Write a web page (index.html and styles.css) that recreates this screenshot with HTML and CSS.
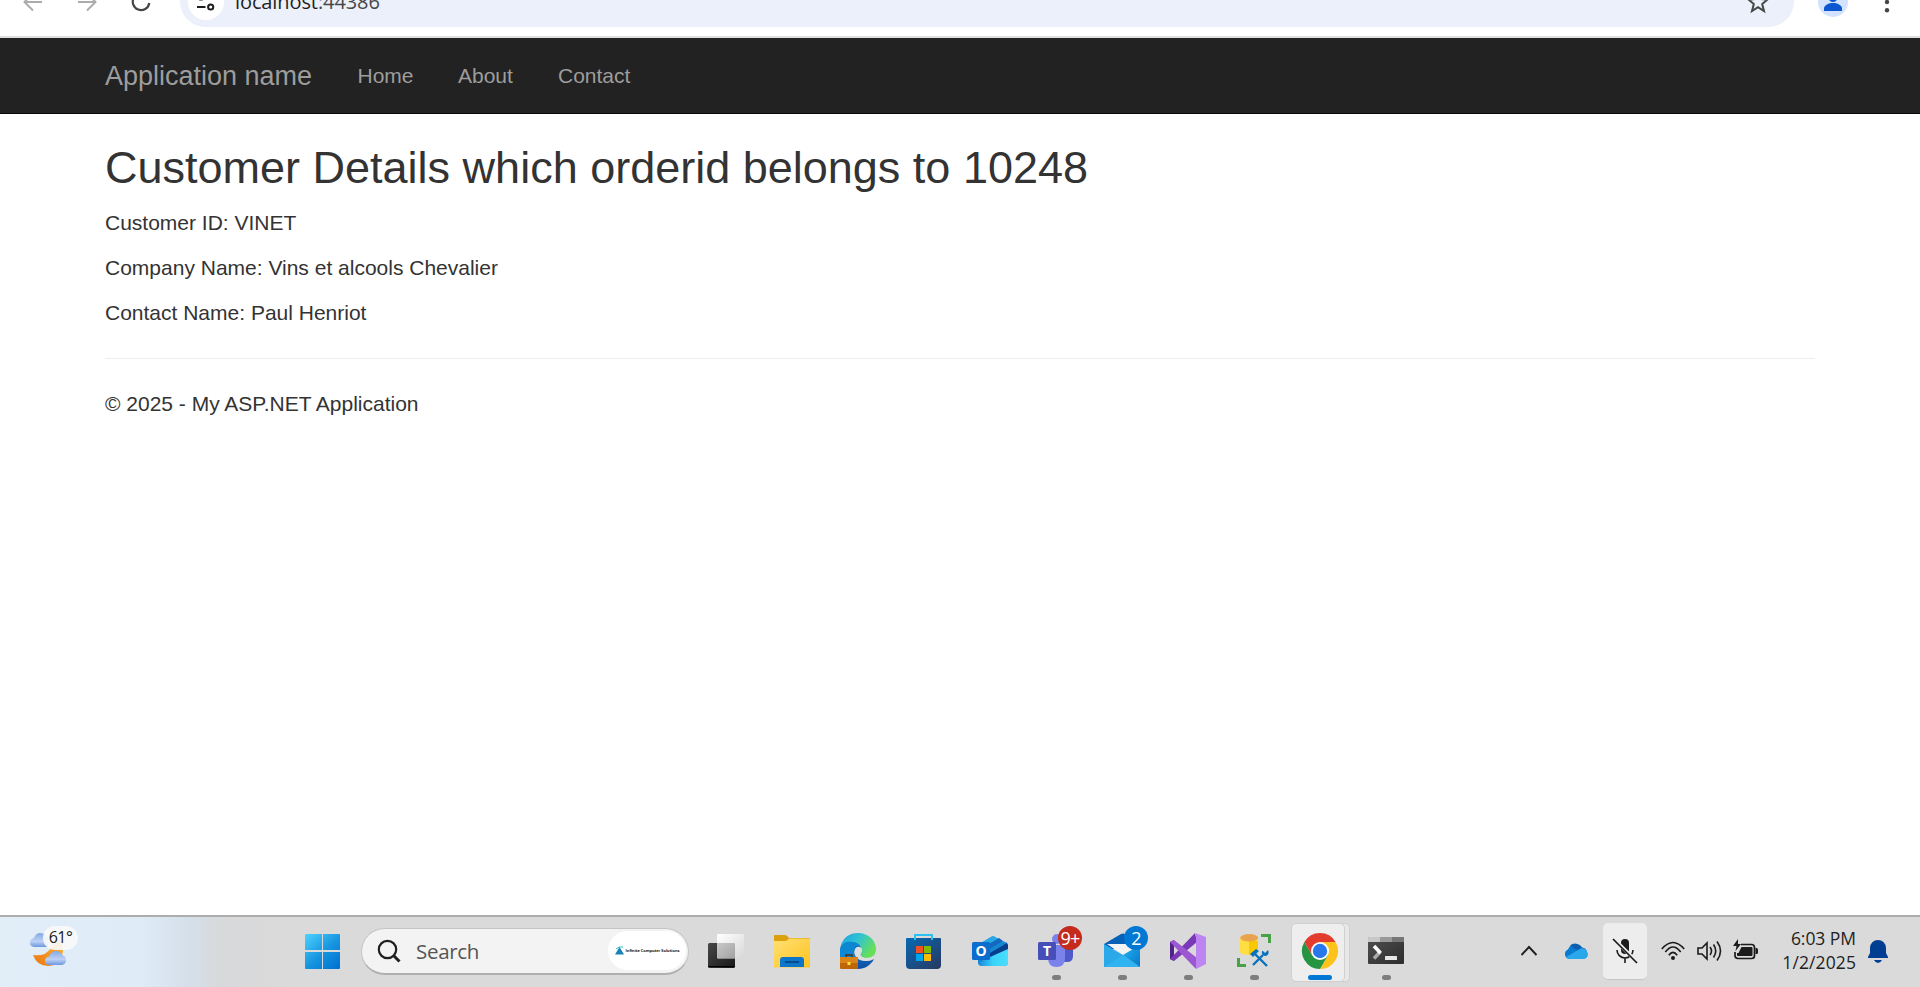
FILE: index.html
```html
<!DOCTYPE html>
<html lang="en">
<head>
<meta charset="utf-8">
<title>My ASP.NET Application</title>
<link rel="stylesheet" href="styles.css">
</head>
<body>
<div class="screen">
  <header class="browser">
    <div class="toolbar">
      <svg class="nav-icon back" width="24" height="24" viewBox="0 0 24 24"><path d="M21 12H4M12 3.500L3.500 12L12 20.500" fill="none" stroke="#acacac" stroke-width="2"/></svg>
      <svg class="nav-icon forward" width="24" height="24" viewBox="0 0 24 24"><path d="M3 12H20M12 3.500L20.500 12L12 20.500" fill="none" stroke="#acacac" stroke-width="2"/></svg>
      <svg class="nav-icon" width="24" height="24" viewBox="0 0 24 24"><path d="M18 6A8.300 8.300 0 1 0 20.300 13M20 3V9H14" fill="none" stroke="#454746" stroke-width="2.200"/></svg>
      <div class="omnibox">
        <span class="site-info"><svg width="24" height="24" viewBox="0 0 24 24" fill="none" stroke="#1f1f1f" stroke-width="2"><circle cx="7" cy="7" r="2.600"/><path d="M12 7H20M3 17H11.500"/><circle cx="16.700" cy="17" r="2.600"/></svg></span>
        <span class="url">localhost<span class="port">:44386</span></span>
        <svg class="star" width="24" height="24" viewBox="0 0 24 24"><path d="M12 2.500L14.600 9L21.500 9.500L16.200 14L18 21L12 17.200L6 21L7.800 14L2.500 9.500L9.400 9Z" fill="none" stroke="#454746" stroke-width="2"/></svg>
      </div>
      <svg class="avatar" width="30" height="30" viewBox="0 0 30 30"><circle cx="15" cy="15" r="15" fill="#d3e3fd"/><circle cx="15" cy="10.500" r="4.500" fill="#0b57d0"/><path d="M6 24V21.500C6 18 11 16 15 16S24 18 24 21.500V24Z" fill="#0b57d0"/></svg>
      <svg class="kebab" width="6" height="24" viewBox="0 0 6 24" fill="#454746"><circle cx="3" cy="4" r="2.200"/><circle cx="3" cy="12" r="2.200"/><circle cx="3" cy="20.300" r="2.200"/></svg>
    </div>
  </header>

  <nav class="navbar">
    <a class="brand">Application name</a>
    <a class="link home">Home</a>
    <a class="link about">About</a>
    <a class="link">Contact</a>
  </nav>

  <main class="content">
    <h2>Customer Details which orderid belongs to 10248</h2>
    <p>Customer ID: VINET</p>
    <p>Company Name: Vins et alcools Chevalier</p>
    <p>Contact Name: Paul Henriot</p>
    <hr>
    <footer><p>© 2025 - My ASP.NET Application</p></footer>
  </main>

  <div class="taskbar">
    <div class="weather">
      <svg width="38" height="36" viewBox="0 0 38 36">
        <defs>
          <linearGradient id="cloud" x2="0" y2="1"><stop stop-color="#86a9e5"/><stop offset=".6" stop-color="#bcd1f4"/><stop offset="1" stop-color="#6d97df"/></linearGradient>
          <linearGradient id="moon" x1="1" y1="0" x2="0" y2="1"><stop stop-color="#f5bd37"/><stop offset="1" stop-color="#ef7411"/></linearGradient>
        </defs>
        <path d="M4 14Q0 13 0 10Q0 6 4 5Q6 0 10 0Q15 0 18 5V14Z" fill="url(#cloud)"/>
        <path d="M3 22Q15 24 21 15Q25 9 26 4Q33 8 33 18Q31 33 18 33Q7 33 3 22Z" fill="url(#moon)"/>
        <path d="M19 32Q15 31 15 28Q15 24 19 23.500Q21 18 26 18Q30 18 32 22Q36 23 36 27.500Q36 31 32 32Z" fill="url(#cloud)"/>
      </svg>
      <span class="temp">61°</span>
    </div>

    <svg class="start" width="36" height="36" viewBox="0 0 36 36">
      <defs><linearGradient id="win" gradientUnits="userSpaceOnUse" x1="0" y1="0" x2="32" y2="36"><stop stop-color="#4fd4ff"/><stop offset=".55" stop-color="#1795e0"/><stop offset="1" stop-color="#0073d2"/></linearGradient></defs>
      <path d="M1 1H17V17H0V2Q0 1 1 1ZM18 1H34Q35 1 35 2V17H18ZM0 19H17V36H1Q0 36 0 35ZM18 19H35V35Q35 36 34 36H18Z" fill="url(#win)"/>
    </svg>

    <div class="search">
      <svg width="24" height="24" viewBox="0 0 24 24" fill="none" stroke="#1f1f1f"><circle cx="10.500" cy="10.500" r="8.700" stroke-width="2.200"/><path d="M16.800 16.800L22.500 22.500" stroke-width="3"/></svg>
      <span class="search-label">Search</span>
      <span class="promo"><svg width="9" height="9" viewBox="0 0 9 9"><path d="M4.500 1L9 8.500H0Z" fill="#1683b4"/><path d="M1 3Q4 0 8 1" fill="none" stroke="#36bdb1"/></svg><span>Infinite Computer Solutions</span></span>
    </div>

    <div class="apps">
      <div class="app"><svg width="36" height="36" viewBox="0 0 36 36">
        <defs><linearGradient id="tv" x2="1" y2="1"><stop stop-color="#484848"/><stop offset="1" stop-color="#171717"/></linearGradient><linearGradient id="tw" x2="1" y2="1"><stop stop-color="#fff"/><stop offset="1" stop-color="#d7d7d7"/></linearGradient><linearGradient id="to" x2="1" y2="1"><stop stop-color="#c9c9c9"/><stop offset="1" stop-color="#a2a2a2"/></linearGradient></defs>
        <rect y="10" width="27" height="25" rx="1.500" fill="url(#tv)"/><path d="M0 33.500H27" stroke="#000"/><rect x="9" y="1" width="27" height="24.500" rx="1" fill="url(#tw)"/><path d="M9 10H26Q27 10 27 11V25H9Z" fill="url(#to)"/></svg></div>

      <div class="app"><svg width="36" height="36" viewBox="0 0 36 36">
        <defs><linearGradient id="fo" x2="1" y2="1"><stop stop-color="#ffdf74"/><stop offset="1" stop-color="#ffc41f"/></linearGradient></defs>
        <path d="M0 3Q0 2 1 2H11Q13 2 15 5H35Q36 5 36 6V12H0Z" fill="#dba00d"/><path d="M0 8H11Q13 8 15 5.500H36V34.500H0Z" fill="url(#fo)"/><path d="M6 34V27Q6 24 9 24H27Q30 24 30 27V34Z" fill="#0c76cb"/><path d="M11 29H25" stroke="#074b8b" stroke-width="2"/></svg></div>

      <div class="app"><svg width="36" height="36" viewBox="0 0 36 36">
        <defs><linearGradient id="eg" x1="0" x2="1" y2=".5"><stop stop-color="#169fe0"/><stop offset=".5" stop-color="#31c3d2"/><stop offset="1" stop-color="#67df58"/></linearGradient><linearGradient id="eb" x2="0" y2="1"><stop stop-color="#1079cc"/><stop offset="1" stop-color="#0c4fa4"/></linearGradient></defs>
        <path d="M0 16C2 4 10 0 18 0C29 0 36 8 36 16C36 22 32 25 27 25C22 25 19 23 20 21C23 18 21 14 17 14Z" fill="url(#eg)"/>
        <path d="M0 17C1 11 6 8 12 9C17 9 21 12 21 16Q18 12 15 16C12 22 18 29 27 28Q31 28 34 26C31 32 25 36 18 36C8 36 0 28 0 17Z" fill="url(#eb)"/>
        <path d="M0 17C2 11 7 8 12 9Q17 9 20 13Q15 12 14 17Q13 21 16 25H0Z" fill="#0e87d3"/>
        <path d="M15 16Q18 12 21.500 15Q23 18 20.500 21Q20 24 26 25Q31 25 34 23L33 26Q28 29 22 27Q14 24 15 16Z" fill="#dcdedf"/>
        <path d="M6 24V22H12V24" fill="none" stroke="#49351f" stroke-width="1.500"/><rect y="24" width="18" height="12" rx="1" fill="#bd6508"/><rect y="24" width="18" height="6" fill="#da8418"/><rect x="7.500" y="29" width="3" height="3" fill="#ffdb35"/></svg></div>

      <div class="app"><svg width="36" height="36" viewBox="0 0 36 36">
        <defs><linearGradient id="st" x2="1" y2="1"><stop stop-color="#0869b4"/><stop offset="1" stop-color="#28385f"/></linearGradient></defs>
        <path d="M1 5H34Q35 5 35 6V32Q35 36 31 36H4Q0 36 0 32V6Q0 5 1 5Z" fill="url(#st)"/><path d="M9 7V2H26V7" fill="none" stroke="#2dc1f3" stroke-width="2"/><path fill="#f25022" d="M10 13H17V20H10Z"/><path fill="#7fba00" d="M18 13H25V20H18Z"/><path fill="#00a4ef" d="M10 21H17V28H10Z"/><path fill="#ffb900" d="M18 21H25V28H18Z"/></svg></div>

      <div class="app"><svg width="36" height="36" viewBox="0 0 36 36">
        <defs><linearGradient id="ol" x2="1" y2="0"><stop stop-color="#1886d7"/><stop offset=".5" stop-color="#3ad3fa"/><stop offset="1" stop-color="#4bdfff"/></linearGradient></defs>
        <path d="M6 12L19 4Q21 2.500 23 4L36 12V29Q36 33 32 33H10Q6 33 6 29Z" fill="#1684d0"/><path d="M7 11L19 4Q21 2.500 23 4L27 6L15 15L7 15Z" fill="#28a9e7"/><path d="M12 14L27 5L31 8L16 18Z" fill="#1269bd"/><path d="M16 20L35 9.500L36 13V16L18 25Z" fill="#063f8c"/><path d="M16 17L31 8L35 10L18 20Z" fill="#1686d3"/><path d="M18 22L34.500 10.500Q36 11 36 13V17L21 23Z" fill="#063f8c"/><path d="M18 24L36 16V29Q36 33 32 33H11Q7 33 6 30Z" fill="url(#ol)"/><rect y="9" width="18" height="18" rx="1.500" fill="#0b6dcd"/><text class="tile-letter" x="9" y="22.800" text-anchor="middle">O</text></svg></div>

      <div class="app"><svg width="36" height="36" viewBox="0 0 36 36">
        <circle cx="19" cy="6" r="5" fill="#7b83eb"/><path d="M27 13H35V23Q35 29 29 29H24Z" fill="#5059c9"/><path d="M10 12H27V25Q27 34 18.500 34T10 25Z" fill="#7b83eb"/><rect y="9" width="18" height="18" rx="1.500" fill="#464eb8"/><text class="tile-letter" x="9" y="22.800" text-anchor="middle">T</text></svg><span class="badge red">9+</span><i class="dot"></i></div>

      <div class="app"><svg width="36" height="36" viewBox="0 0 36 36">
        <defs><linearGradient id="ml" x2="1" y2="1"><stop stop-color="#20b4f1"/><stop offset="1" stop-color="#0876ca"/></linearGradient></defs>
        <path d="M0 11L17 1Q19 0 21 1L36 11V16H0Z" fill="#0861b6"/><path d="M3 11H36L19 22Z" fill="#f3f3f3"/><path d="M0 11L19 22L36 34H0Z" fill="#2aa9ea"/><path d="M0 34L19 22L36 34Z" fill="#2fb4f1"/><path d="M19 22L36 12V34Z" fill="url(#ml)"/></svg><span class="badge blue">2</span><i class="dot"></i></div>

      <div class="app"><svg width="36" height="36" viewBox="0 0 36 36">
        <path d="M0 9L4 7V28L0 26Z" fill="#52218a"/><path d="M0 26L25 0L27 9L4 28Z" fill="#7938b5"/><path d="M0 9L4 7L27 25V36L25 35Z" fill="#9c57d3"/><path d="M25 0L36 4V31L26 36V1Z" fill="#bd84f2"/></svg><i class="dot"></i></div>

      <div class="app"><svg width="36" height="36" viewBox="0 0 36 36">
        <path d="M4 5V19Q5 22 13 22L22 18V5Z" fill="#ffde42"/><path d="M13 8H22V19L13 22Z" fill="#f9c900"/><ellipse cx="13.200" cy="4.800" rx="9" ry="3.700" fill="#e9a34e"/><path d="M25 2.500H33.500V10M2.500 25V32.500H10" fill="none" stroke="#46a147" stroke-width="3"/><path d="M17 32L27 22M18 20L31 33" stroke="#0872bd" stroke-width="2.400"/><path d="M14 21L20 16L23 18L17 24Z" fill="#0872bd"/><path d="M26 18Q25 23 30 23Q34 21 32 17L29 20L27 18Z" fill="#0872bd"/></svg><i class="dot"></i></div>

      <div class="app active"><svg width="36" height="36" viewBox="0 0 36 36">
        <path d="M18 18L2.400 9A18 18 0 0 1 33.600 9Z" fill="#e33b2e"/><path d="M18 9H33.600A18 18 0 0 1 18 36L26 22Z" fill="#fcc31d"/><path d="M2.400 9A18 18 0 0 0 18 36L25.800 22.500L18 18L10.200 22.500Z" fill="#269443"/><path d="M2.400 9L10.200 22.500L18 9Z" fill="#e33b2e"/><circle cx="18" cy="18" r="9" fill="#fff"/><circle cx="18" cy="18" r="7.200" fill="#2878eb"/></svg><i class="dot"></i></div>

      <div class="app"><svg width="36" height="36" viewBox="0 0 36 36">
        <defs><linearGradient id="tm" x2="1" y2="1"><stop stop-color="#505050"/><stop offset="1" stop-color="#2d2d2d"/></linearGradient></defs>
        <rect y="4" width="36" height="27" rx="1" fill="url(#tm)"/><path d="M0 9V5Q0 4 1 4H12V9Z" fill="#c8c8c8"/><path d="M12 4H24V9H12Z" fill="#999"/><path d="M24 4H35Q36 4 36 5V9H24Z" fill="#777"/><path d="M12.500 18.500L6 25.500" stroke="#aaa" stroke-width="3.600"/><path d="M6 13L12.500 20" stroke="#fff" stroke-width="3.600"/><rect x="17" y="23" width="12" height="4" rx=".5" fill="#e7e7e7"/></svg><i class="dot"></i></div>
    </div>

    <div class="tray">
      <svg class="chevron" width="18" height="18" viewBox="0 0 18 18"><path d="M1.500 13L9 5L16.500 13" fill="none" stroke="#202020" stroke-width="1.900"/></svg>
      <svg class="cloud" width="24" height="18" viewBox="0 0 24 18"><path d="M5 17A5 5 0 0 1 4 7.500A8 8 0 0 1 18 5.500A6 6 0 0 1 19.500 17Z" fill="#087bd0"/><path d="M6 3.500A8 8 0 0 1 18 5.500L20 10L11 7Z" fill="#0a60ae"/><path d="M2 15L15 7.500Q18 5 22 8Q24 11 24 13Q23 17 19 17H5Q3 17 2 15Z" fill="#28a8ea"/></svg>
      <span class="mic"><svg width="26" height="26" viewBox="0 0 26 26"><rect x="9" y="1" width="8" height="15" rx="4" fill="#1b1b1b"/><path d="M5 12A8 8 0 0 0 21 12M13 20V25" fill="none" stroke="#1b1b1b" stroke-width="1.600"/><path d="M2 1L25 24" stroke="#ededed" stroke-width="3.500"/><path d="M1 1L25 25" stroke="#1b1b1b" stroke-width="1.700"/></svg></span>
      <svg class="wifi" width="24" height="20" viewBox="0 0 24 20" fill="none" stroke="#1b1b1b" stroke-width="1.600"><path d="M.8 8Q12-5 23.200 8M4.300 11Q12 1 19.700 11M7.800 14.200Q12 8.500 16.200 14.200"/><circle cx="12" cy="17" r="2" fill="#1b1b1b" stroke="none"/></svg>
      <svg class="volume" width="25" height="22" viewBox="0 0 25 22" fill="none" stroke="#1b1b1b" stroke-width="1.600"><path d="M1 8H5L10 3V19L5 14H1ZM13 7Q16 11 13 15M16.500 4.500Q21 11 16.500 17.500M20 1.500Q27 11 20 20.500"/></svg>
      <svg class="battery" width="26" height="22" viewBox="0 0 26 22"><path d="M8 4.500H18.500Q21.500 4.500 21.500 7.500V15.500Q21.500 18.500 18.500 18.500H5Q2 18.500 2 15.500V12" fill="none" stroke="#1b1b1b" stroke-width="1.700"/><path d="M8.500 7H18.500Q19.500 7 19.500 8V15Q19.500 16 18.500 16H5Q4 16 4 15V13H5.500Z" fill="#1b1b1b"/><path d="M22.500 8H23.500Q25 8 25 9.500V12.500Q25 14 23.500 14H22.500Z" fill="#1b1b1b"/><path d="M5-1L0 6H3.500L2.500 11L8 4H5Z" fill="#1b1b1b"/></svg>
      <span class="clock"><span class="time">6:03 PM</span><span class="date">1/2/2025</span></span>
      <svg class="bell" width="20" height="24" viewBox="0 0 20 24" fill="#003e92"><path d="M2 9A8 8 0 0 1 18 9V14L20 18V19H0V18L2 14ZM6 21H14Q12.500 24 10 24T6 21Z"/></svg>
    </div>
  </div>
</div>
</body>
</html>
```
FILE: styles.css
```css
* { box-sizing: border-box; }
body { margin: 0; background: #fff; }
svg { display: block; flex: none; overflow: visible; }
.screen { height: 987px; display: flex; flex-direction: column; overflow: hidden; font-family: "Liberation Sans", Arial, sans-serif; }

.browser { height: 38px; flex: none; overflow: hidden; border-bottom: 2px solid #dedfe0; }
.toolbar { height: 51px; margin-top: -24px; padding-left: 21px; display: flex; align-items: center; }
.back, .forward { margin-right: 30px; }
.omnibox { width: 1614px; height: 51px; margin-left: 27px; padding: 0 24px 0 8px; border-radius: 26px; background: #ebf0fa; display: flex; align-items: center; }
.site-info { width: 36px; height: 36px; border-radius: 50%; background: #fff; display: flex; align-items: center; justify-content: center; margin-top: 1px; }
.url { margin-left: 11px; font: 20px "Open Sans", sans-serif; letter-spacing: -.1px; color: #1f1f1f; }
.port { color: #474747; }
.star { margin-left: auto; }
.avatar { margin-left: 24px; }
.kebab { margin-left: 36px; }

.navbar { height: 76px; flex: none; padding-left: 105px; background: #222; border-bottom: 1px solid #080808; display: flex; align-items: center; color: #9d9d9d; white-space: nowrap; font-size: 21px; }
.brand { width: 252.5px; padding-top: 1px; font-size: 27px; }
.home { width: 100.5px; }
.about { width: 100px; }

.content { flex: 1; padding: 29px 105px 0; color: #333; font-size: 21px; line-height: 30px; }
h2 { margin: 0 0 15px; font-size: 45px; font-weight: 400; line-height: 49.5px; }
p { margin: 0 0 15px; }
hr { height: 1.5px; margin: 30px 0; border: 0; background: #eee; }

.taskbar { height: 72px; flex: none; padding-bottom: 2px; border-top: 2px solid #adadad; display: flex; align-items: center; background: linear-gradient(90deg, #e1edf7 0, #dfebf7 140px, #d5dfea 190px, #d8d9db 220px, #dadada 280px); font-family: "Open Sans", "Noto Sans", sans-serif; }
.weather { position: relative; width: 275px; padding-left: 30px; }
.temp { position: absolute; left: 43px; top: -7px; width: 35px; height: 24px; border-radius: 12px; background: rgba(250, 250, 250, .9); color: #202020; font-size: 16px; line-height: 23px; letter-spacing: -.5px; text-align: center; }
.start { margin-left: 30px; }
.search { width: 328px; height: 47px; margin-left: 20px; padding: 0 2px 0 16px; border: 1px solid #c4c4c4; border-bottom: 2px solid #afafaf; border-radius: 24px; background: #f3f3f3; display: flex; align-items: center; }
.search svg { margin-left: -1px; }
.search-label { margin-left: 15px; padding-top: 1px; color: #555; font-size: 20.500px; letter-spacing: -.3px; }
.promo { width: 78px; height: 39px; margin-left: auto; border-radius: 20px; background: #fff; display: flex; align-items: center; justify-content: center; gap: 2px; color: #111; font: bold 3.9px "Open Sans", sans-serif; white-space: nowrap; }
.promo svg { margin: 0; }
.apps { display: flex; margin-left: 4px; }
.app { position: relative; width: 66px; height: 57px; display: flex; align-items: center; justify-content: center; }
.tile-letter { fill: #fff; font: bold 14px "Open Sans", sans-serif; }
.dot { position: absolute; left: 28.5px; bottom: 0; width: 9px; height: 5px; border-radius: 3px; background: #7e7e7e; }
.badge { position: absolute; left: 35px; top: 3px; width: 24px; height: 24px; border-radius: 50%; color: #fff; font-size: 18px; line-height: 24px; text-align: center; letter-spacing: -.7px; }
.red { background: #c42b1c; }
.blue { background: #0078d4; }
.active::before, .active::after { content: ""; position: absolute; top: 0; height: 57px; border: 1px solid #d0d0d0; border-radius: 5px; background: #eee; }
.active::before { left: 25px; width: 36px; background: #e8e8e8; }
.active::after { left: 4px; width: 52px; }
.active svg, .active .dot { z-index: 1; }
.active svg { position: relative; }
.active .dot { left: 21px; width: 24px; background: #0078d4; }

.tray { display: flex; align-items: center; margin-left: 101px; }
.cloud { margin-left: 26px; }
.mic { width: 44px; height: 57px; margin-left: 15px; border-radius: 5px; border-bottom: 1px solid #c6c6c6; background: #ededed; display: flex; align-items: center; justify-content: center; }
.wifi { margin-left: 14px; }
.volume { margin-left: 12px; }
.battery { margin-left: 11px; }
.clock { width: 97px; margin-top: -2px; display: flex; flex-direction: column; text-align: right; font-size: 17.500px; line-height: 24px; color: #1f1f1f; white-space: nowrap; }
.time { letter-spacing: -.05px; }
.date { letter-spacing: .1px; }
.bell { margin-left: 12px; }
```
